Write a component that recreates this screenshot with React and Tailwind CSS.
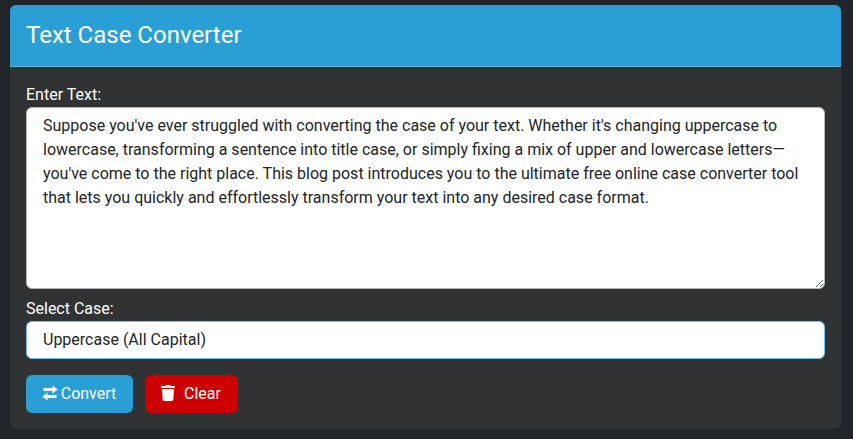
import React, { useState } from 'react';
import { FaTrash } from 'react-icons/fa';

const SAMPLE = "Suppose you've ever struggled with converting the case of your text. Whether it's changing uppercase to lowercase, transforming a sentence into title case, or simply fixing a mix of upper and lowercase letters—you've come to the right place. This blog post introduces you to the ultimate free online case converter tool that lets you quickly and effortlessly transform your text into any desired case format.";

function SwapIcon() {
    return (
        <svg viewBox="0 0 16 16" className="mb-[2px] h-4 w-4" fill="currentColor">
            <path d="M10.5 0.5 L15.7 4.5 L10.5 8.5 V6 H1.5 V3 H10.5 Z" />
            <path d="M5.5 7.5 V10 H14.5 V13 H5.5 V15.5 L0.3 11.5 Z" />
        </svg>
    );
}

export default function App() {
    const [text, setText] = useState(SAMPLE);
    const [mode, setMode] = useState('upper');

    return (
        <div className="h-[439px] overflow-hidden bg-[#212529] pl-[10px] pr-[12px] pt-[5px] font-['Roboto',sans-serif] text-white">
            <div className="h-[424px] rounded-md bg-[#303234]">
                <div className="flex h-[62px] items-center rounded-t-md border-b border-[#5bb5e0] bg-[#2a9fd6] px-4 pb-[2px]">
                    <h1 className="text-2xl font-normal leading-[30px]">Text Case Converter</h1>
                </div>
                <div className="flex flex-col px-4 pt-[16px]">
                    <label className="text-base leading-6">Enter Text:</label>
                    <textarea
                        value={text}
                        onChange={(event) => setText(event.target.value)}
                        className="h-[182px] w-full rounded-md border border-[#b3b3b3] bg-white px-4 py-[6px] text-base leading-6 text-[#212529] outline-none"
                    />
                    <label className="mt-[8px] text-base leading-6">Select Case:</label>
                    <select
                        value={mode}
                        onChange={(event) => setMode(event.target.value)}
                        className="h-[38px] w-full appearance-none rounded-md border border-[#76bde6] bg-white px-4 text-base text-[#212529] outline-none"
                    >
                        <option value="upper">Uppercase (All Capital)</option>
                        <option value="lower">Lowercase</option>
                        <option value="title">Title Case</option>
                    </select>
                    <div className="mt-4 flex gap-3">
                        <button className="flex h-[38px] w-[107px] items-center justify-center gap-[3px] rounded-md bg-[#2a9fd6] pr-[1px] text-base text-white">
                            <SwapIcon />
                            Convert
                        </button>
                        <button className="flex h-[38px] w-[93px] items-center justify-center gap-[8px] rounded-md bg-[#cc0000] pr-[2px] text-base text-white">
                            <FaTrash className="mb-[2px] h-4 w-4" />
                            Clear
                        </button>
                    </div>
                </div>
            </div>
        </div>
    );
}
